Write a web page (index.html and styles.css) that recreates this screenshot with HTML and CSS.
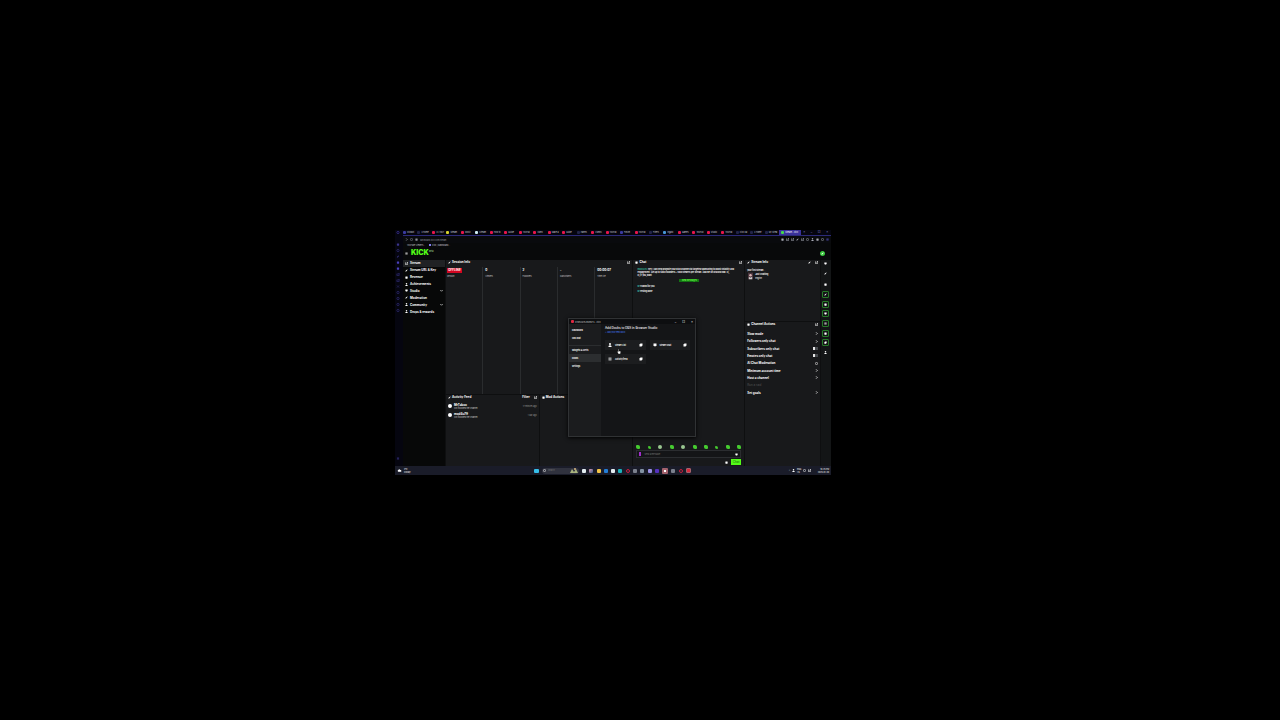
FILE: index.html
```html
<!DOCTYPE html>
<html lang="en">
<head>
    <meta charset="UTF-8">
    <meta name="viewport" content="width=device-width, initial-scale=1.0">
    <title>Kick Dashboard</title>
    <link rel="stylesheet" href="styles.css">
</head>
<body>
    <svg class="sprites" aria-hidden="true">
        <symbol id="ring" viewBox="0 0 8 8"><circle cx="4" cy="4" r="3" fill="none" stroke="currentColor" stroke-width="1.5"/></symbol>
        <symbol id="square" viewBox="0 0 8 8"><rect x="1" y="1" width="6" height="6" rx="1" fill="currentColor"/></symbol>
        <symbol id="frame" viewBox="0 0 8 8"><path d="M5 1h2v6H1V2h2M4 4l3-3" fill="none" stroke="currentColor" stroke-width="1.5"/></symbol>
        <symbol id="menu" viewBox="0 0 8 8"><path d="M1 2h6M1 4h6M1 6h6" stroke="currentColor" stroke-width="1.3"/></symbol>
        <symbol id="pen" viewBox="0 0 8 8"><path d="M1 7l1-3 4-3 1 1-3 4z" fill="currentColor"/></symbol>
        <symbol id="pop" viewBox="0 0 8 8"><path d="M1 3l2-2h4v4L5 7H1z" fill="currentColor"/></symbol>
        <symbol id="right" viewBox="0 0 8 8"><path d="M3 1l3 3-3 3" fill="none" stroke="currentColor" stroke-width="2"/></symbol>
        <symbol id="down" viewBox="0 0 8 8"><path d="M1 3l3 3 3-3" fill="none" stroke="currentColor" stroke-width="1.8"/></symbol>
        <symbol id="chat" viewBox="0 0 8 8"><path d="M1 1h6v5H5L4 8 3 6H1z" fill="currentColor"/></symbol>
        <symbol id="cloud" viewBox="0 0 12 8"><path d="M3 7a2.5 2.5 0 0 1 0-4.500A3 3 0 0 1 8 3a2 2 0 0 1 1 4z" fill="currentColor"/></symbol>
        <symbol id="person" viewBox="0 0 8 8"><circle cx="4" cy="2" r="2" fill="currentColor"/><path d="M1 8V6q3-3 6 0v2z" fill="currentColor"/></symbol>
        <symbol id="close" viewBox="0 0 8 8"><path d="M1 1l6 6M7 1L1 7" stroke="currentColor" stroke-width="1.2"/></symbol>
    </svg>
    <div class="desktop">
        <div class="browser">
            <nav class="dock" aria-label="Browser sidebar">
                <svg class="icon lit"><use href="#ring"/></svg>
                <svg class="icon dock-first"><use href="#square"/></svg>
                <svg class="icon"><use href="#ring"/></svg>
                <svg class="icon"><use href="#pen"/></svg>
                <svg class="icon lit"><use href="#square"/></svg>
                <svg class="icon lit"><use href="#square"/></svg>
                <svg class="icon"><use href="#frame"/></svg>
                <svg class="icon"><use href="#frame"/></svg>
                <svg class="icon"><use href="#close"/></svg>
                <svg class="icon"><use href="#ring"/></svg>
                <svg class="icon"><use href="#ring"/></svg>
                <svg class="icon"><use href="#ring"/></svg>
                <svg class="icon"><use href="#ring"/></svg>
                <svg class="icon dock-last"><use href="#menu"/></svg>
            </nav>
            <div class="window">
                <div class="tabs">
                    <a href="#" class="tab blue">Kickbot</a>
                    <a href="#" class="tab dark">x Home</a>
                    <a href="#" class="tab red">(2) YouT</a>
                    <a href="#" class="tab yellow">Stream</a>
                    <a href="#" class="tab red">Music</a>
                    <a href="#" class="tab white">Stream</a>
                    <a href="#" class="tab red">How to</a>
                    <a href="#" class="tab red">Guide</a>
                    <a href="#" class="tab red">YouTub</a>
                    <a href="#" class="tab red">Video</a>
                    <a href="#" class="tab red">Make a</a>
                    <a href="#" class="tab red">Guide</a>
                    <a href="#" class="tab dark">Panels</a>
                    <a href="#" class="tab red">Videos</a>
                    <a href="#" class="tab red">YouTub</a>
                    <a href="#" class="tab blue">Forum</a>
                    <a href="#" class="tab red">YouTub</a>
                    <a href="#" class="tab dark">Filters</a>
                    <a href="#" class="tab sky">Elgato</a>
                    <a href="#" class="tab red">Games</a>
                    <a href="#" class="tab red">YouTub</a>
                    <a href="#" class="tab red">Studio</a>
                    <a href="#" class="tab red">YouTub</a>
                    <a href="#" class="tab dark">Kick Da</a>
                    <a href="#" class="tab dark">x Home</a>
                    <a href="#" class="tab dark">My Strea</a>
                    <a href="#" class="tab green active">Stream - Kick</a>
                    <span class="window-buttons"><b>×</b><b>–</b><b>□</b><b>×</b></span>
                </div>
                <div class="address">
                    <svg class="icon"><use href="#right"/></svg>
                    <svg class="icon"><use href="#ring"/></svg>
                    <svg class="icon"><use href="#square"/></svg>
                    <input type="text" class="url" aria-label="Address" value="dashboard.kick.com/stream">
                    <span class="tools">
                        <svg class="icon"><use href="#square"/></svg>
                        <svg class="icon"><use href="#frame"/></svg>
                        <svg class="icon"><use href="#frame"/></svg>
                        <svg class="icon"><use href="#pen"/></svg>
                        <svg class="icon"><use href="#frame"/></svg>
                        <svg class="icon"><use href="#ring"/></svg>
                        <svg class="icon"><use href="#person"/></svg>
                        <svg class="icon"><use href="#square"/></svg>
                        <svg class="icon"><use href="#ring"/></svg>
                        <svg class="icon violet"><use href="#menu"/></svg>
                    </span>
                </div>
                <div class="bookmarks">
                    <a href="#">YouTube Viewers...</a>
                    <a href="#" class="marked">Kick | Dashboard...</a>
                </div>
                <header class="topbar">
                    <svg class="icon"><use href="#menu"/></svg>
                    <h1 class="logo">KICK<sup>beta</sup></h1>
                    <span class="avatar"><svg class="icon"><use href="#pen"/></svg></span>
                </header>
                <div class="page">
                    <nav class="sidebar">
                        <div class="links">
                            <a href="#" class="current"><svg class="icon"><use href="#frame"/></svg>Stream</a>
                            <a href="#"><svg class="icon"><use href="#pen"/></svg>Stream URL &amp; Key</a>
                            <a href="#"><svg class="icon"><use href="#square"/></svg>Revenue</a>
                            <a href="#"><svg class="icon"><use href="#person"/></svg>Achievements</a>
                            <a href="#"><svg class="icon"><use href="#chat"/></svg>Studio<svg class="icon more"><use href="#down"/></svg></a>
                            <a href="#"><svg class="icon"><use href="#pen"/></svg>Moderation</a>
                            <a href="#"><svg class="icon"><use href="#person"/></svg>Community<svg class="icon more"><use href="#down"/></svg></a>
                            <a href="#"><svg class="icon"><use href="#person"/></svg>Drops &amp; rewards</a>
                        </div>
                    </nav>
                    <main class="panels">
                        <div class="left">
                            <section class="panel session">
                                <h2><svg class="icon"><use href="#pen"/></svg>Session Info<svg class="icon end"><use href="#frame"/></svg></h2>
                                <div class="stats">
                                    <div><b class="offline">OFFLINE</b><span>Session</span></div>
                                    <div><b>0</b><span>Viewers</span></div>
                                    <div><b>2</b><span>Followers</span></div>
                                    <div><b>-</b><span>Subscribers</span></div>
                                    <div><b>00:00:07</b><span>Time live</span></div>
                                </div>
                            </section>
                            <div class="feeds">
                                <section class="panel">
                                    <h2><svg class="icon"><use href="#pen"/></svg>Activity Feed<span class="end">Filter</span><svg class="icon popout"><use href="#frame"/></svg></h2>
                                    <ul class="feed">
                                        <li><i></i><div><b>MrTaboo</b><span>just followed the channel</span></div><time>17 minutes ago</time></li>
                                        <li><i></i><div><b>mod4u79</b><span>just followed the channel</span></div><time>1 day ago</time></li>
                                    </ul>
                                </section>
                                <section class="panel">
                                    <h2><svg class="icon"><use href="#square"/></svg>Mod Actions</h2>
                                </section>
                            </div>
                        </div>
                        <section class="panel chat">
                            <h2><svg class="icon"><use href="#square"/></svg>Chat<svg class="icon end"><use href="#frame"/></svg></h2>
                            <div class="messages">
                                <p><em>mod4u79:</em> Hey, I can help promote your Kick channel via targeted sponsoring to boost visibility and<br>engagement. Get up to 5000 followers + 1000 viewers per stream. Add me on Discord now: cj_<br>cj_17 you_want</p>
                                <a href="#" class="new">New messages</a>
                                <p class="line"><em>M</em> Thanks for you</p>
                                <p class="line"><em>M</em> Testing done</p>
                            </div>
                            <div class="emotes">
                                <i></i><i class="small"></i><i class="pale"></i><i></i><i class="pale"></i><i></i><i></i><i class="small"></i><i></i><i></i>
                            </div>
                            <div class="compose">
                                <b></b>
                                <input type="text" aria-label="Message" placeholder="Send a message">
                                <svg class="icon"><use href="#chat"/></svg>
                            </div>
                            <div class="send">
                                <svg class="icon"><use href="#square"/></svg>
                                <button type="button">Chat</button>
                            </div>
                        </section>
                        <div class="right">
                            <section class="panel">
                                <h2><svg class="icon"><use href="#pen"/></svg>Stream Info<svg class="icon end"><use href="#pen"/></svg><svg class="icon popout"><use href="#frame"/></svg></h2>
                                <div class="info">
                                    <b>your first stream...</b>
                                    <div class="category">
                                        <svg viewBox="0 0 6 8"><path fill="#49343c" d="M0 0h6v8H0z"/><circle cx="3" cy="3" r="1.500" fill="#d8b0b0"/><path d="M1 8V5l2 1 2-1v3z" fill="#ccc"/></svg>
                                        <div><b>Just Chatting</b><span class="tag">English</span></div>
                                    </div>
                                </div>
                            </section>
                            <section class="panel">
                                <h2><svg class="icon"><use href="#square"/></svg>Channel Actions<svg class="icon end"><use href="#frame"/></svg></h2>
                                <ul class="actions">
                                    <li>Slow mode<svg class="icon"><use href="#right"/></svg></li>
                                    <li>Followers only chat<svg class="icon"><use href="#right"/></svg></li>
                                    <li><label for="subs">Subscribers only chat</label><input type="checkbox" id="subs"></li>
                                    <li><label for="emotes">Emotes only chat</label><input type="checkbox" id="emotes"></li>
                                    <li>AI Chat Moderation<svg class="icon"><use href="#ring"/></svg></li>
                                    <li>Minimum account time<svg class="icon"><use href="#right"/></svg></li>
                                    <li>Host a channel<svg class="icon"><use href="#right"/></svg></li>
                                    <li class="muted">Run a raid</li>
                                    <li>Set goals<svg class="icon"><use href="#right"/></svg></li>
                                </ul>
                            </section>
                        </div>
                        <div class="rail">
                            <div class="rail-buttons">
                                <button type="button" aria-label="Chat"><svg class="icon"><use href="#chat"/></svg></button>
                                <button type="button" aria-label="Edit"><svg class="icon"><use href="#pen"/></svg></button>
                                <button type="button" aria-label="Video" class="lower"><svg class="icon"><use href="#square"/></svg></button>
                                <button type="button" aria-label="Session" class="on"><svg class="icon"><use href="#pen"/></svg></button>
                                <button type="button" aria-label="Activity" class="on"><svg class="icon"><use href="#square"/></svg></button>
                                <button type="button" aria-label="Messages" class="on"><svg class="icon"><use href="#chat"/></svg></button>
                                <button type="button" aria-label="Info" class="on"><svg class="icon"><use href="#menu"/></svg></button>
                                <button type="button" aria-label="Actions" class="on"><svg class="icon"><use href="#square"/></svg></button>
                                <button type="button" aria-label="Moderate" class="on"><svg class="icon"><use href="#pop"/></svg></button>
                                <button type="button" aria-label="Volume"><svg class="icon"><use href="#person"/></svg></button>
                            </div>
                        </div>
                    </main>
                </div>
            </div>
        </div>
        <footer class="taskbar">
            <div class="weather"><svg class="icon"><use href="#cloud"/></svg><span>3°C<br>Cloudy</span></div>
            <div class="start">
                <i class="app cyan"></i>
                <label class="search"><svg class="icon"><use href="#ring"/></svg><input type="text" placeholder="Search" aria-label="Search"><svg class="art" viewBox="0 0 8 5"><path d="M0 5l2-4 2 3 2-3 2 4z" fill="#a8b37e"/><circle cx="5" cy="1" r="1" fill="#d5b57f"/></svg></label>
                <div class="apps">
                    <i class="app white"></i><i class="app mix"></i><i class="app folder"></i><i class="app sky"></i><i class="app white"></i><i class="app teal"></i><i class="app opera"></i><i class="app grey"></i><i class="app slate"></i><i class="app lilac"></i><i class="app violet"></i><i class="app shot"></i><i class="app grey"></i><i class="app opera"></i><i class="app rec"></i>
                </div>
            </div>
            <div class="tray">
                <span>^</span><svg class="icon"><use href="#person"/></svg><span>ENG<br>US</span><svg class="icon"><use href="#ring"/></svg><svg class="icon"><use href="#frame"/></svg><span class="clock">10:25 PM<br>2025-01-30</span>
            </div>
        </footer>
        <div class="dialog" role="dialog" aria-label="Stream docks">
            <div class="title"><i></i>STREAM ELEMENTS - Kick<span><b>–</b><b>□</b><b>×</b></span></div>
            <div class="dialog-body">
                <nav>
                    <a href="#">Dashboard</a>
                    <a href="#">Obs chat</a>
                    <a href="#" class="group">Widgets &amp; Alerts</a>
                    <a href="#" class="current">Docks</a>
                    <a href="#">Settings</a>
                </nav>
                <div class="docks">
                    <h2>Add Docks to OBS in Browser Studio</h2>
                    <a href="#">+ Add your new dock</a>
                    <div class="cards">
                        <button type="button"><svg class="icon"><use href="#person"/></svg>Viewer List<svg class="icon end"><use href="#pop"/></svg></button>
                        <button type="button"><svg class="icon"><use href="#chat"/></svg>Viewer chat<svg class="icon end"><use href="#pop"/></svg></button>
                        <button type="button"><svg class="icon"><use href="#menu"/></svg>Activity feed<svg class="icon end"><use href="#pop"/></svg></button>
                    </div>
                </div>
            </div>
            <svg class="pointer" viewBox="0 0 6 8"><path d="M2 0v4L0 4l2 4h3l1-4-3-1V0z" fill="#fff" stroke="#000" stroke-width=".5"/></svg>
        </div>
    </div>
</body>
</html>
```
FILE: styles.css
```css
* {
    margin: 0;
    padding: 0;
    box-sizing: border-box;
}

body {
    min-height: 100vh;
    display: flex;
    padding: 230px 449px 245px 395px;
    background: #000;
    color: #fff;
    font-family: Inter, "Liberation Sans", sans-serif;
    font-size: 3px;
    line-height: 4px;
}

a {
    color: inherit;
    text-decoration: none;
}

ul {
    list-style: none;
}

button,
input {
    font: inherit;
    color: inherit;
    background: none;
    border: none;
    outline: none;
    min-width: 0;
}

.sprites {
    position: absolute;
    width: 0;
    height: 0;
}

.icon {
    width: 3px;
    height: 3px;
    flex: none;
    display: block;
}

.end {
    margin-left: auto;
}

.desktop {
    position: relative;
    flex: 1;
    min-width: 0;
    display: flex;
    flex-direction: column;
    background: #08090a;
}

.browser {
    flex: 1;
    display: flex;
}

/* browser sidebar */
.dock {
    width: 8px;
    display: flex;
    flex-direction: column;
    align-items: center;
    gap: 3px;
    padding: 1px 2px 6px 0;
    background: #05050f;
    color: #3b358c;
}

.dock .icon {
    width: 4px;
}

.dock .dock-first {
    margin-top: 6px;
}

.dock .dock-last {
    margin-top: auto;
}

.dock .lit {
    color: #4b41bd;
}

.window {
    flex: 1;
    min-width: 0;
    display: flex;
    flex-direction: column;
}

.tabs {
    height: 6px;
    display: flex;
    background: #05050f;
    border-bottom: 1px solid #2c2a78;
    font-size: 2px;
    line-height: 5px;
}

.tab {
    flex: 1;
    min-width: 0;
    display: flex;
    align-items: center;
    gap: 1px;
    overflow: hidden;
    white-space: nowrap;
    color: #d0d0da;
}

.tab::before {
    content: "";
    width: 3px;
    height: 3px;
    flex: none;
    border-radius: 1px;
    background: #222448;
}

.tab.red::before {
    background: #e8144a;
}

.tab.yellow::before {
    background: #d7d22c;
}

.tab.white::before {
    background: #cdeaf2;
}

.tab.sky::before {
    background: #4796d6;
}

.tab.blue::before {
    background: #3a3aa0;
}

.tab.green::before {
    background: #43d94b;
}

.tab.active {
    flex: none;
    width: 22px;
    padding-left: 2px;
    background: #3a329c;
    color: #fff;
}

.window-buttons {
    width: 30px;
    display: flex;
    justify-content: space-between;
    padding: 0 3px 0 2px;
    color: #6f6cb0;
    font-size: 3px;
}

.address {
    height: 7px;
    display: flex;
    align-items: center;
    gap: 2px;
    padding: 0 2px;
    background: #090a0d;
    color: #8c8e99;
}

.url {
    flex: 1;
    font-size: 2px;
}

.tools {
    display: flex;
    gap: 2px;
    color: #a9abb5;
}

.tools .violet {
    color: #5a52c8;
}

.bookmarks {
    height: 5px;
    display: flex;
    gap: 4px;
    padding-left: 4px;
    font-size: 2px;
    color: #c4c4cc;
}

.bookmarks .marked::before {
    content: "";
    display: inline-block;
    width: 2px;
    height: 2px;
    margin-right: 1px;
    background: #8580ee;
}

.topbar {
    height: 12px;
    display: flex;
    align-items: center;
    gap: 3px;
    padding: 0 6px 2px 2px;
}

.logo {
    display: flex;
    color: #53fc18;
    font-family: "Liberation Sans Narrow", Inter, sans-serif;
    font-size: 7px;
    font-weight: 900;
    line-height: 8px;
}

.logo sup {
    font-size: 2px;
    line-height: 4px;
    color: #78a86a;
}

.avatar {
    width: 5px;
    height: 5px;
    display: flex;
    align-items: center;
    justify-content: center;
    margin-left: auto;
    border-radius: 50%;
    background: #38c93c;
}

.page {
    flex: 1;
    display: flex;
}

.sidebar {
    width: 42px;
    background: #070808;
    font-weight: 700;
}

.links {
    height: 55px;
    display: grid;
    grid-auto-rows: 1fr;
}

.links a {
    display: flex;
    align-items: center;
    gap: 2px;
    padding: 0 2px;
}

.links .current {
    background: #202224;
}

.links .more {
    margin-left: auto;
}

/* dashboard panels */
.panels {
    flex: 1;
    display: grid;
    grid-template-columns: 187fr 111fr 75fr 10px;
    gap: 1px;
    padding-left: 1px;
    background: #0e0f10;
}

.panel {
    background: #18191b;
    min-width: 0;
}

.panel h2 {
    height: 5px;
    display: flex;
    align-items: center;
    gap: 1px;
    padding: 0 2px;
    font-size: 3px;
    line-height: 5px;
}

.panel h2 .popout {
    margin-left: 3px;
}

.left {
    display: grid;
    grid-template-rows: 133fr 71fr;
    gap: 1px;
}

.session {
    display: flex;
    flex-direction: column;
}

.stats {
    flex: 1;
    display: grid;
    grid-template-columns: repeat(5, 1fr);
    padding-top: 2px;
}

.stats div {
    padding: 1px 2px;
    border-right: 1px solid #2a2c2e;
}

.stats div:first-child {
    padding-left: 1px;
}

.stats div:last-child {
    border: none;
}

.stats b,
.stats span {
    display: block;
}

.stats b {
    height: 5px;
}

.stats span {
    margin-top: 1px;
    font-size: 2px;
    color: #ccc;
}

.stats .offline {
    width: 15px;
    background: #d30621;
    line-height: 5px;
    text-align: center;
}

.feeds {
    display: grid;
    grid-template-columns: 1fr 1fr;
    gap: 1px;
}

.feed {
    padding: 4px 2px;
}

.feed li {
    height: 9px;
    display: flex;
    gap: 2px;
}

.feed i {
    width: 4px;
    height: 4px;
    border-radius: 50%;
    background: #fff;
}

.feed b,
.feed span {
    display: block;
    line-height: 3px;
}

.feed span,
.feed time {
    font-size: 2px;
    color: #ccc;
}

.feed time {
    margin-left: auto;
    color: #999;
}

.chat {
    display: flex;
    flex-direction: column;
}

.messages {
    flex: 1;
    padding: 3px 3px 0 4px;
    font-size: 2px;
    font-weight: 700;
    line-height: 3px;
    white-space: nowrap;
}

.messages em {
    color: #38b99c;
    font-style: normal;
}

.messages .new {
    display: block;
    width: 20px;
    margin: 2px auto 3px;
    background: #137313;
    color: #69f546;
    text-align: center;
}

.messages .line {
    margin-bottom: 2px;
}

.emotes {
    display: flex;
    justify-content: space-between;
    align-items: center;
    padding: 0 3px 1px;
}

.emotes i {
    width: 4px;
    height: 4px;
    border-radius: 1px 2px;
    background: #46cc30;
}

.emotes .small {
    width: 3px;
    height: 3px;
}

.emotes .pale {
    background: #9ac790;
    border-radius: 50%;
}

.compose {
    height: 8px;
    display: flex;
    align-items: center;
    gap: 3px;
    margin: 0 3px;
    padding: 0 2px;
    border: 1px solid #2b2d30;
    background: #141517;
}

.compose b {
    width: 2px;
    height: 4px;
    background: #a12dcc;
}

.compose input {
    flex: 1;
    font-size: 2px;
}

.send {
    display: flex;
    justify-content: flex-end;
    align-items: center;
    gap: 3px;
    padding: 1px 3px;
}

.send button {
    width: 10px;
    height: 6px;
    background: #53fc18;
    color: #176009;
}

.right {
    display: grid;
    grid-template-rows: 61fr 143fr;
    gap: 1px;
}

.info {
    padding: 3px 2px;
    font-size: 2px;
}

.category {
    display: flex;
    gap: 2px;
    padding-left: 1px;
}

.category svg {
    width: 5px;
    height: 8px;
}

.category b,
.category span {
    display: block;
}

.actions {
    height: 72px;
    display: grid;
    grid-auto-rows: 1fr;
    padding: 3px 2px;
    font-weight: 700;
}

.actions li {
    display: flex;
    align-items: center;
    justify-content: space-between;
}

.actions .muted {
    font-weight: 400;
    color: #555;
}

.actions input {
    width: 5px;
    height: 3px;
    appearance: none;
    border-left: 2px solid #e5e5e5;
    background: #484b4f;
}

.rail {
    padding-right: 1px;
    background: #131516;
}

.rail-buttons {
    height: 96px;
    display: flex;
    flex-direction: column;
    align-items: center;
    justify-content: space-between;
}

.rail button {
    width: 7px;
    height: 7px;
    display: flex;
    align-items: center;
    justify-content: center;
}

.rail .lower {
    margin-top: 2px;
}

.rail .on {
    border: 1px solid #267a27;
    border-radius: 1px;
}

/* windows taskbar */
.taskbar {
    height: 9px;
    display: grid;
    grid-template-columns: 139px 1fr 44px;
    align-items: center;
    background: #1a1c29;
    font-size: 2px;
    line-height: 3px;
}

.weather {
    display: flex;
    align-items: center;
    gap: 2px;
    padding-left: 2px;
}

.weather .icon {
    width: 5px;
    height: 5px;
}

.start {
    display: flex;
    align-items: center;
    gap: 3px;
}

.apps {
    width: 109px;
    display: flex;
    align-items: center;
    justify-content: space-between;
}

.app {
    width: 4px;
    height: 4px;
    border-radius: 1px;
}

.app.cyan {
    width: 5px;
    background: #36bde8;
}

.app.white {
    background: #e3edf0;
}

.app.mix {
    background: linear-gradient(135deg, #e7a2b4, #294f83);
}

.app.folder {
    background: #f2c346;
}

.app.sky {
    background: #247ed6;
}

.app.teal {
    background: #1bb1bb;
}

.app.opera {
    border: 1px solid #c51e3c;
    border-radius: 50%;
}

.app.grey {
    background: #7b808d;
}

.app.slate {
    background: #8292a3;
}

.app.lilac {
    background: #9990e5;
}

.app.violet {
    background: #5430bd;
}

.app.shot {
    width: 6px;
    height: 6px;
    border: 2px solid #a3626c;
    background: #fff;
}

.app.rec {
    width: 5px;
    height: 5px;
    border: 1px solid #a3626c;
    background: #d82b3c;
}

.search {
    width: 37px;
    height: 6px;
    display: flex;
    align-items: center;
    gap: 2px;
    padding: 0 1px;
    border-radius: 3px;
    background: #30323e;
}

.search input {
    flex: 1;
}

.search .art {
    width: 8px;
    height: 5px;
}

.tray {
    display: flex;
    align-items: center;
    gap: 2px;
    padding: 0 2px;
}

.tray .clock {
    margin-left: auto;
    text-align: right;
}

/* floating window over the dashboard */
.dialog {
    position: absolute;
    left: 173px;
    top: 88px;
    width: 128px;
    height: 119px;
    display: flex;
    flex-direction: column;
    border: 1px solid #303234;
    background: #141517;
    box-shadow: 0 1px 4px #000;
}

.title {
    height: 5px;
    display: flex;
    align-items: center;
    gap: 1px;
    padding: 0 2px;
    background: #0d0e10;
    font-size: 2px;
    color: #ccc;
}

.title i {
    width: 3px;
    height: 3px;
    border-radius: 1px;
    background: #df2841;
}

.title span {
    display: flex;
    gap: 6px;
    margin-left: auto;
    font-size: 3px;
}

.dialog-body {
    flex: 1;
    display: flex;
}

.dialog nav {
    width: 32px;
    padding-top: 2px;
    background: #1b1c1e;
    font-size: 2px;
    font-weight: 700;
}

.dialog nav a {
    display: block;
    padding-left: 3px;
    line-height: 8px;
}

.dialog nav .group {
    margin-top: 3px;
    border-top: 1px solid #2b2d2f;
}

.dialog nav .current {
    background: #2c2e30;
}

.docks {
    flex: 1;
    padding: 2px 5px 0 4px;
}

.docks h2 {
    font-size: 3px;
    font-weight: 500;
    white-space: nowrap;
}

.docks > a {
    display: block;
    font-size: 2px;
    color: #4a80ff;
}

.cards {
    display: grid;
    grid-template-columns: 1fr 1fr;
    gap: 4px;
    margin-top: 6px;
}

.cards button {
    height: 10px;
    display: flex;
    align-items: center;
    gap: 3px;
    padding: 0 3px;
    background: #1c1d1f;
    font-size: 2px;
    font-weight: 700;
}

.cards .icon {
    width: 4px;
    height: 4px;
}

/* mouse pointer */
.pointer {
    position: absolute;
    left: 48px;
    top: 30px;
    width: 4px;
    height: 5px;
}
```
